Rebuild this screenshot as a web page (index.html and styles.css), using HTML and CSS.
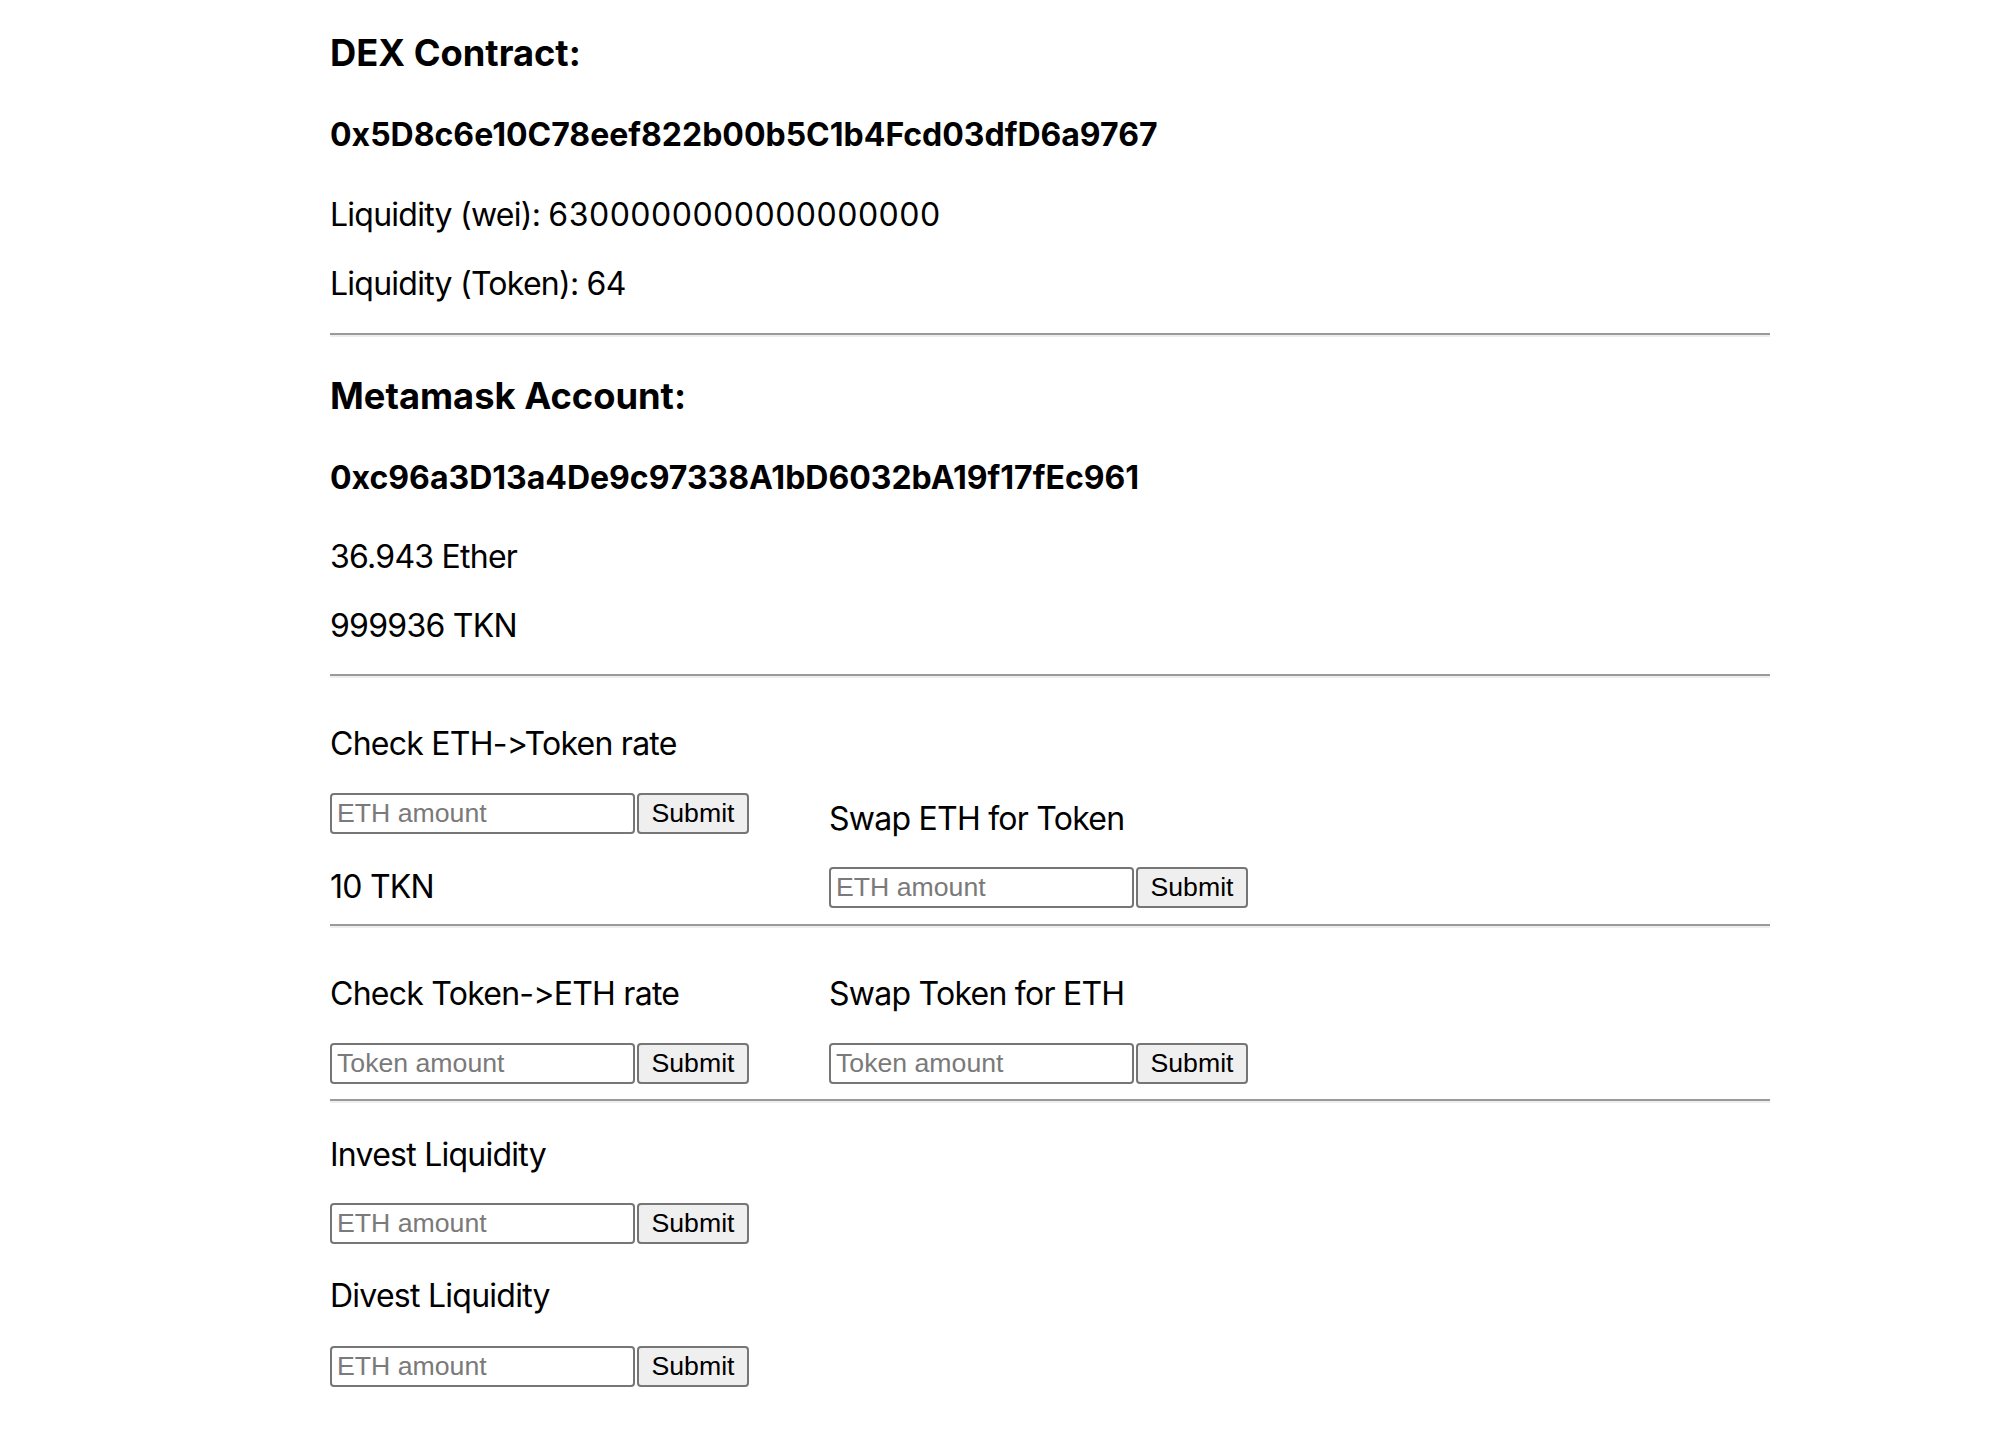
FILE: index.html
```html
<!DOCTYPE html>
<html lang="en">
<head>
<meta charset="utf-8">
<title>DEX</title>
<link rel="stylesheet" href="styles.css">
</head>
<body>
<div class="app">
  <h3 class="title first">DEX Contract:</h3>
  <h4 class="addr">0x5D8c6e10C78eef822b00b5C1b4Fcd03dfD6a9767</h4>
  <p class="text after-addr">Liquidity (wei): <span class="big-value">6300000000000000000</span></p>
  <p class="text next">Liquidity (Token): 64</p>
  <hr class="rule rule-a">
  <h3 class="title after-rule">Metamask Account:</h3>
  <h4 class="addr">0xc96a3D13a4De9c97338A1bD6032bA19f17fEc961</h4>
  <p class="text after-addr2">36.943 Ether</p>
  <p class="text next">999936 TKN</p>
  <hr class="rule rule-b">

  <div class="row row-end">
    <div class="col col-left">
      <p class="text">Check ETH-&gt;Token rate</p>
      <form class="field">
        <input class="amount" type="text" placeholder="ETH amount">
        <button class="submit" type="button">Submit</button>
      </form>
      <p class="text result">10 TKN</p>
    </div>
    <div class="col">
      <p class="text">Swap ETH for Token</p>
      <form class="field field-tight">
        <input class="amount" type="text" placeholder="ETH amount">
        <button class="submit" type="button">Submit</button>
      </form>
    </div>
  </div>
  <hr class="rule rule-c">

  <div class="row">
    <div class="col col-left">
      <p class="text">Check Token-&gt;ETH rate</p>
      <form class="field">
        <input class="amount" type="text" placeholder="Token amount">
        <button class="submit" type="button">Submit</button>
      </form>
    </div>
    <div class="col">
      <p class="text">Swap Token for ETH</p>
      <form class="field">
        <input class="amount" type="text" placeholder="Token amount">
        <button class="submit" type="button">Submit</button>
      </form>
    </div>
  </div>
  <hr class="rule rule-d">

  <p class="text after-rule2">Invest Liquidity</p>
  <form class="field field-tight">
    <input class="amount" type="text" placeholder="ETH amount">
    <button class="submit" type="button">Submit</button>
  </form>
  <p class="text after-form">Divest Liquidity</p>
  <form class="field field-last">
    <input class="amount" type="text" placeholder="ETH amount">
    <button class="submit" type="button">Submit</button>
  </form>
</div>
</body>
</html>
```

FILE: styles.css
```css
html, body {
  margin: 0;
  padding: 0;
  background: #ffffff;
}

body {
  font-family: Inter, "Noto Sans", "Liberation Sans", sans-serif;
  font-feature-settings: "calt" 0, "liga" 0;
  font-variant-ligatures: none;
  color: #000000;
}

.app {
  display: flex;
  flex-direction: column;
  width: 1440px;
  margin-left: 330px;
  padding-top: 31px;
  padding-bottom: 52px;
}

.title {
  margin: 37px 0 0;
  font-size: 36.3px;
  line-height: 44px;
  font-weight: 700;
}

.title.first {
  margin-top: 0;
}

.addr {
  margin: 41px 0 0;
  font-size: 32px;
  line-height: 38px;
  font-weight: 700;
}

.text {
  margin: 0;
  font-size: 32px;
  line-height: 38px;
  font-weight: 400;
  letter-spacing: -0.75px;
}

.big-value {
  letter-spacing: 0.5px;
}

.after-addr { margin-top: 42px; }
.after-addr2 { margin-top: 41px; }
.next { margin-top: 31px; }

.rule {
  margin: 0;
  height: 0;
  border: 0;
  border-top: 2px solid #9a9a9a;
  border-bottom: 2px solid #eeeeee;
}

.rule-a { margin-top: 30px; }
.rule-b { margin-top: 29px; }
.rule-c { margin-top: 16px; }
.rule-d { margin-top: 15px; }

.row {
  display: flex;
  margin-top: 47px;
}

.row-end {
  align-items: flex-end;
}

.col {
  display: flex;
  flex-direction: column;
}

.col-left {
  width: 499px;
  flex: none;
}

.result {
  margin-top: 34px;
  margin-bottom: 2px;
}

.field {
  display: flex;
  gap: 2px;
  margin: 30px 0 0;
}

.field-tight { margin-top: 29px; }
.field-last { margin-top: 31px; }

.after-rule2 { margin-top: 33px; }
.after-form { margin-top: 33px; }

.amount {
  box-sizing: border-box;
  width: 305px;
  height: 41px;
  margin: 0;
  padding: 0 5px;
  border: 2px solid #767676;
  border-radius: 4px;
  background: #ffffff;
  font-family: "Liberation Sans", Arial, sans-serif;
  font-size: 26.67px;
  color: #000000;
}

.amount::placeholder {
  color: #7a7a7a;
}

.submit {
  box-sizing: border-box;
  width: 112px;
  height: 41px;
  margin: 0;
  padding: 0;
  border: 2px solid #767676;
  border-radius: 4px;
  background: #efefef;
  font-family: "Liberation Sans", Arial, sans-serif;
  font-size: 26.67px;
  color: #000000;
}
```
